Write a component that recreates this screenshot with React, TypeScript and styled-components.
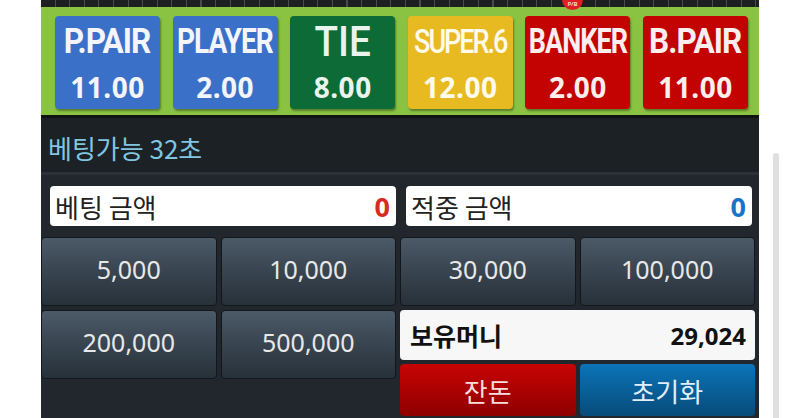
import React from "react";
import styled, { createGlobalStyle } from "styled-components";

const Global = createGlobalStyle`
  html, body { margin: 0; padding: 0; background: #ffffff; overflow: hidden; }
  body { font-family: "Noto Sans", "Noto Sans CJK KR", sans-serif; }
`;

const KR = `"Noto Sans CJK KR", "Noto Sans", sans-serif`;

const Page = styled.div`
  width: 800px;
  height: 418px;
  display: flex;
  overflow: hidden;
`;

const Panel = styled.div`
  margin-left: 41px;
  width: 718px;
  height: 418px;
  display: flex;
  flex-direction: column;
  background: #21272c;
  position: relative;
`;

const Ticks = styled.div`
  height: 7px;
  background-color: #1d1f21;
  background-image: repeating-linear-gradient(
    to right,
    transparent 0,
    transparent 13.5px,
    #4a4d50 13.5px,
    #4a4d50 14.6px
  );
`;

const Marker = styled.div`
  position: absolute;
  left: 521px;
  top: -11px;
  width: 21px;
  height: 21px;
  border-radius: 50%;
  background: #e02020;
  color: #ffd0d0;
  font: 700 6px "Noto Sans", sans-serif;
  display: flex;
  align-items: flex-end;
  justify-content: center;
  padding-bottom: 2px;
  box-sizing: border-box;
`;

const Board = styled.div`
  background: #89c341;
  border-bottom: 3px solid #101213;
  display: grid;
  grid-template-columns: repeat(6, minmax(0, 1fr));
  column-gap: 12.6px;
  padding: 9px 11px 0 14px;
  box-sizing: border-box;
  height: 111px;
`;

const BetButton = styled.div<{ $bg: string; $fg: string }>`
  height: 93px;
  min-width: 0;
  border-radius: 4px;
  background: ${(p) => p.$bg};
  color: ${(p) => p.$fg};
  box-shadow: 1px 2px 2px rgba(0, 0, 0, 0.35);
  display: flex;
  flex-direction: column;
  align-items: center;
  padding-top: 8px;
  box-sizing: border-box;
  gap: 13px;
`;

const BetLabel = styled.div<{ $scale: number; $weight: number; $size: number; $spacing: number }>`
  height: 36px;
  line-height: 36px;
  font-family: Roboto, "Noto Sans", sans-serif;
  font-weight: ${(p) => p.$weight};
  font-size: ${(p) => p.$size}px;
  letter-spacing: ${(p) => p.$spacing}px;
  white-space: nowrap;
  transform: scaleX(${(p) => p.$scale});
`;

const Odds = styled.div`
  height: 28px;
  line-height: 28px;
  font-family: "Noto Sans", sans-serif;
  font-weight: 700;
  font-size: 28px;
  letter-spacing: 0.5px;
`;

const Status = styled.div`
  height: 57px;
  background: #1b2125;
  border-bottom: 3px solid #2b3238;
  color: #80c6e0;
  font-family: ${KR};
  font-size: 26px;
  padding-left: 7px;
  display: flex;
  align-items: center;
  padding-top: 4px;
  box-sizing: border-box;
`;

const Lower = styled.div`
  flex: 1;
  display: flex;
  flex-direction: column;
  padding: 11px 4px 0 0;
  gap: 11px;
`;

const Fields = styled.div`
  display: grid;
  grid-template-columns: 1fr 1fr;
  column-gap: 10px;
  padding-left: 9px;
  padding-right: 3px;
`;

const Field = styled.div`
  height: 40px;
  background: #ffffff;
  border-radius: 4px;
  display: flex;
  align-items: center;
  justify-content: space-between;
  padding: 0 6px 0 5px;
`;

const FieldLabel = styled.span`
  font-family: ${KR};
  font-size: 26px;
  color: #222;
`;

const FieldValue = styled.span<{ $color: string }>`
  font-family: "Noto Sans", sans-serif;
  font-weight: 700;
  font-size: 27px;
  color: ${(p) => p.$color};
`;

const Pad = styled.div`
  display: grid;
  grid-template-columns: repeat(4, 1fr);
  gap: 4px;
  align-items: start;
`;

const Chip = styled.div`
  height: 69px;
  border-radius: 4px;
  border: 1px solid #12171b;
  box-sizing: border-box;
  background: linear-gradient(to bottom, #4c5a68 0%, #36424d 55%, #27313a 100%);
  color: #e8e8e8;
  font-family: "Noto Sans", sans-serif;
  font-size: 25px;
  display: flex;
  align-items: center;
  justify-content: center;
  padding-bottom: 6px;
`;

const Side = styled.div`
  grid-column: 3 / span 2;
  display: flex;
  flex-direction: column;
  gap: 4px;
`;

const Balance = styled.div`
  height: 50px;
  background: #f7f7f7;
  border-radius: 4px;
  display: flex;
  align-items: center;
  justify-content: space-between;
  padding: 0 9px 0 10px;
  color: #111;
`;

const BalanceLabel = styled.span`
  font-family: ${KR};
  font-weight: 700;
  font-size: 25px;
`;

const BalanceValue = styled.span`
  font-family: "Noto Sans", sans-serif;
  font-weight: 700;
  font-size: 24px;
`;

const Actions = styled.div`
  display: grid;
  grid-template-columns: 1fr 1fr;
  gap: 4px;
`;

const Action = styled.div<{ $top: string; $bottom: string; $fg: string }>`
  height: 52px;
  border-radius: 4px;
  background: linear-gradient(to bottom, ${(p) => p.$top}, ${(p) => p.$bottom});
  color: ${(p) => p.$fg};
  font-family: ${KR};
  font-size: 26px;
  display: flex;
  align-items: center;
  justify-content: center;
`;

const Track = styled.div`
  margin-left: 14px;
  margin-top: 153px;
  width: 6px;
  height: 280px;
  border-radius: 3px 3px 0 0;
  background: #e0e0e0;
`;

const bets = [
  { label: "P.PAIR", odds: "11.00", bg: "#3b70c8", fg: "#f3f5fa", scale: 0.9, weight: 700, size: 35, spacing: -1 },
  { label: "PLAYER", odds: "2.00", bg: "#3b70c8", fg: "#f3f5fa", scale: 0.8, weight: 700, size: 35, spacing: -1.2 },
  { label: "TIE", odds: "8.00", bg: "#0c6b36", fg: "#eaf3ec", scale: 0.92, weight: 500, size: 42, spacing: 0 },
  { label: "SUPER.6", odds: "12.00", bg: "#e7ba22", fg: "#fffbea", scale: 0.82, weight: 500, size: 33, spacing: -2.5 },
  { label: "BANKER", odds: "2.00", bg: "#c30202", fg: "#fbeeee", scale: 0.77, weight: 700, size: 35, spacing: -1.2 },
  { label: "B.PAIR", odds: "11.00", bg: "#c30202", fg: "#fbeeee", scale: 0.9, weight: 700, size: 35, spacing: -1 },
];

export default function App() {
  return (
    <Page>
      <Global />
      <Panel>
        <Ticks />
        <Marker>P/B</Marker>
        <Board>
          {bets.map((b) => (
            <BetButton key={b.label} $bg={b.bg} $fg={b.fg}>
              <BetLabel $scale={b.scale} $weight={b.weight} $size={b.size} $spacing={b.spacing}>
                {b.label}
              </BetLabel>
              <Odds>{b.odds}</Odds>
            </BetButton>
          ))}
        </Board>
        <Status>베팅가능 32초</Status>
        <Lower>
          <Fields>
            <Field>
              <FieldLabel>베팅 금액</FieldLabel>
              <FieldValue $color="#d62b20">0</FieldValue>
            </Field>
            <Field>
              <FieldLabel>적중 금액</FieldLabel>
              <FieldValue $color="#1a72c9">0</FieldValue>
            </Field>
          </Fields>
          <Pad>
            <Chip>5,000</Chip>
            <Chip>10,000</Chip>
            <Chip>30,000</Chip>
            <Chip>100,000</Chip>
            <Chip>200,000</Chip>
            <Chip>500,000</Chip>
            <Side>
              <Balance>
                <BalanceLabel>보유머니</BalanceLabel>
                <BalanceValue>29,024</BalanceValue>
              </Balance>
              <Actions>
                <Action $top="#c80303" $bottom="#8e0000" $fg="#f8dede">잔돈</Action>
                <Action $top="#0b74b8" $bottom="#074b7a" $fg="#e2eef8">초기화</Action>
              </Actions>
            </Side>
          </Pad>
        </Lower>
      </Panel>
      <Track />
    </Page>
  );
}
